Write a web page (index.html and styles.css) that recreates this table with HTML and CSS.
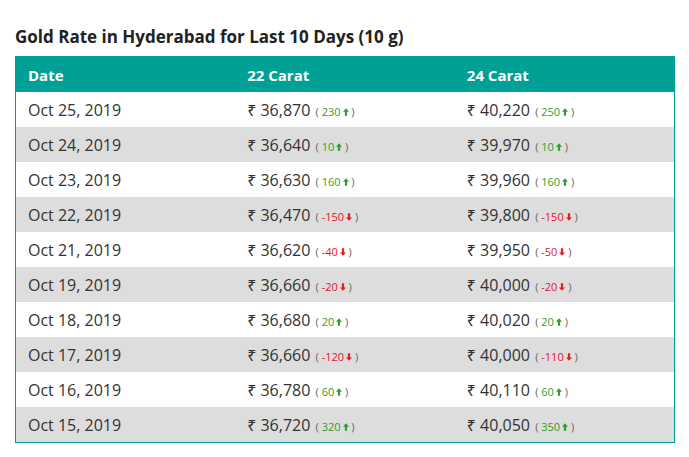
FILE: index.html
```html
<!DOCTYPE html>
<html>
<head>
<meta charset="utf-8">
<link rel="stylesheet" href="styles.css">
</head>
<body>
<div class="wrap">
  <h2 class="title">Gold Rate in Hyderabad for Last 10 Days (10 g)</h2>
  <table class="rates">
    <thead>
      <tr><th>Date</th><th>22 Carat</th><th>24 Carat</th></tr>
    </thead>
    <tbody>
      <tr><td>Oct 25, 2019</td><td>₹ 36,870 <span class="chg">( <span class="up">230<svg class="arr" viewBox="0 0 8 10"><path d="M4 0L8 4.5H5.5V10H2.5V4.5H0Z"/></svg></span> )</span></td><td>₹ 40,220 <span class="chg">( <span class="up">250<svg class="arr" viewBox="0 0 8 10"><path d="M4 0L8 4.5H5.5V10H2.5V4.5H0Z"/></svg></span> )</span></td></tr>
      <tr><td>Oct 24, 2019</td><td>₹ 36,640 <span class="chg">( <span class="up">10<svg class="arr" viewBox="0 0 8 10"><path d="M4 0L8 4.5H5.5V10H2.5V4.5H0Z"/></svg></span> )</span></td><td>₹ 39,970 <span class="chg">( <span class="up">10<svg class="arr" viewBox="0 0 8 10"><path d="M4 0L8 4.5H5.5V10H2.5V4.5H0Z"/></svg></span> )</span></td></tr>
      <tr><td>Oct 23, 2019</td><td>₹ 36,630 <span class="chg">( <span class="up">160<svg class="arr" viewBox="0 0 8 10"><path d="M4 0L8 4.5H5.5V10H2.5V4.5H0Z"/></svg></span> )</span></td><td>₹ 39,960 <span class="chg">( <span class="up">160<svg class="arr" viewBox="0 0 8 10"><path d="M4 0L8 4.5H5.5V10H2.5V4.5H0Z"/></svg></span> )</span></td></tr>
      <tr><td>Oct 22, 2019</td><td>₹ 36,470 <span class="chg">( <span class="down">-150<svg class="arr" viewBox="0 0 8 10"><path d="M4 10L8 5.5H5.5V0H2.5V5.5H0Z"/></svg></span> )</span></td><td>₹ 39,800 <span class="chg">( <span class="down">-150<svg class="arr" viewBox="0 0 8 10"><path d="M4 10L8 5.5H5.5V0H2.5V5.5H0Z"/></svg></span> )</span></td></tr>
      <tr><td>Oct 21, 2019</td><td>₹ 36,620 <span class="chg">( <span class="down">-40<svg class="arr" viewBox="0 0 8 10"><path d="M4 10L8 5.5H5.5V0H2.5V5.5H0Z"/></svg></span> )</span></td><td>₹ 39,950 <span class="chg">( <span class="down">-50<svg class="arr" viewBox="0 0 8 10"><path d="M4 10L8 5.5H5.5V0H2.5V5.5H0Z"/></svg></span> )</span></td></tr>
      <tr><td>Oct 19, 2019</td><td>₹ 36,660 <span class="chg">( <span class="down">-20<svg class="arr" viewBox="0 0 8 10"><path d="M4 10L8 5.5H5.5V0H2.5V5.5H0Z"/></svg></span> )</span></td><td>₹ 40,000 <span class="chg">( <span class="down">-20<svg class="arr" viewBox="0 0 8 10"><path d="M4 10L8 5.5H5.5V0H2.5V5.5H0Z"/></svg></span> )</span></td></tr>
      <tr><td>Oct 18, 2019</td><td>₹ 36,680 <span class="chg">( <span class="up">20<svg class="arr" viewBox="0 0 8 10"><path d="M4 0L8 4.5H5.5V10H2.5V4.5H0Z"/></svg></span> )</span></td><td>₹ 40,020 <span class="chg">( <span class="up">20<svg class="arr" viewBox="0 0 8 10"><path d="M4 0L8 4.5H5.5V10H2.5V4.5H0Z"/></svg></span> )</span></td></tr>
      <tr><td>Oct 17, 2019</td><td>₹ 36,660 <span class="chg">( <span class="down">-120<svg class="arr" viewBox="0 0 8 10"><path d="M4 10L8 5.5H5.5V0H2.5V5.5H0Z"/></svg></span> )</span></td><td>₹ 40,000 <span class="chg">( <span class="down">-110<svg class="arr" viewBox="0 0 8 10"><path d="M4 10L8 5.5H5.5V0H2.5V5.5H0Z"/></svg></span> )</span></td></tr>
      <tr><td>Oct 16, 2019</td><td>₹ 36,780 <span class="chg">( <span class="up">60<svg class="arr" viewBox="0 0 8 10"><path d="M4 0L8 4.5H5.5V10H2.5V4.5H0Z"/></svg></span> )</span></td><td>₹ 40,110 <span class="chg">( <span class="up">60<svg class="arr" viewBox="0 0 8 10"><path d="M4 0L8 4.5H5.5V10H2.5V4.5H0Z"/></svg></span> )</span></td></tr>
      <tr><td>Oct 15, 2019</td><td>₹ 36,720 <span class="chg">( <span class="up">320<svg class="arr" viewBox="0 0 8 10"><path d="M4 0L8 4.5H5.5V10H2.5V4.5H0Z"/></svg></span> )</span></td><td>₹ 40,050 <span class="chg">( <span class="up">350<svg class="arr" viewBox="0 0 8 10"><path d="M4 0L8 4.5H5.5V10H2.5V4.5H0Z"/></svg></span> )</span></td></tr>
    </tbody>
  </table>
</div>
</body>
</html>
```

FILE: styles.css
```css
html, body {
  margin: 0;
  padding: 0;
  background: #ffffff;
}
body {
  font-family: "Open Sans", "Noto Sans", sans-serif;
  color: #333333;
}
.wrap {
  padding: 25px 14px 0 15px;
}
.title {
  margin: 0 0 7px 0;
  font-size: 17px;
  font-weight: 700;
  line-height: 24px;
  color: #222222;
}
.rates {
  width: 660px;
  border-collapse: collapse;
  border: 1px solid #00a096;
  table-layout: fixed;
}
.rates th {
  background: #00a096;
  color: #ffffff;
  font-size: 15px;
  font-weight: 700;
  text-align: left;
  height: 35px;
  padding: 0 0 0 12px;
}
.rates td {
  height: 35px;
  padding: 0 0 0 12px;
  font-size: 16px;
  color: #333333;
  white-space: nowrap;
}
.rates tbody tr:nth-child(even) td {
  background: #dddddd;
}
.chg {
  font-size: 11px;
  color: #666666;
  margin-left: 1px;
}
.up {
  color: #2e9e2e;
}
.down {
  color: #e4132e;
}
.arr {
  width: 6px;
  height: 8px;
  margin-left: 2px;
  vertical-align: 0px;
}
.up .arr {
  fill: #2e9e2e;
}
.down .arr {
  fill: #e41f1f;
}
```
